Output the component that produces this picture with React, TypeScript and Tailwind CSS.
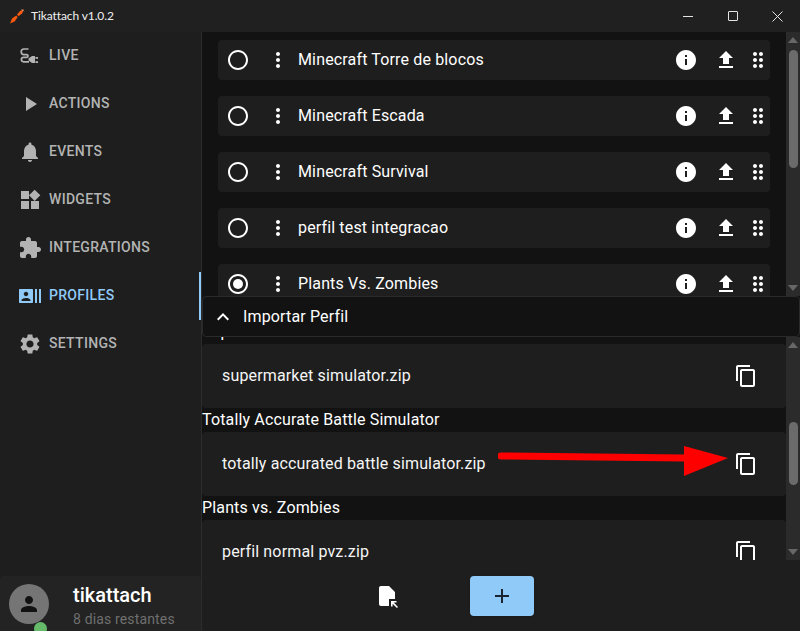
import type { ReactNode } from "react";

const icons = {
  radio: "M12 2C6.48 2 2 6.48 2 12s4.48 10 10 10 10-4.48 10-10S17.52 2 12 2zm0 18c-4.42 0-8-3.58-8-8s3.58-8 8-8 8 3.58 8 8-3.58 8-8 8z",
  more: "M12 8c1.1 0 2-.9 2-2s-.9-2-2-2-2 .9-2 2 .9 2 2 2zm0 2c-1.1 0-2 .9-2 2s.9 2 2 2 2-.9 2-2-.9-2-2-2zm0 6c-1.1 0-2 .9-2 2s.9 2 2 2 2-.9 2-2-.9-2-2-2z",
  info: "M12 2C6.48 2 2 6.48 2 12s4.48 10 10 10 10-4.48 10-10S17.52 2 12 2zm1 15h-2v-6h2v6zm0-8h-2V7h2v2z",
  upload: "M9 16h6v-6h4l-7-7-7 7h4zm-4 2h14v2H5z",
  drag: "M11 18c0 1.1-.9 2-2 2s-2-.9-2-2 .9-2 2-2 2 .9 2 2zm-2-8c-1.1 0-2 .9-2 2s.9 2 2 2 2-.9 2-2-.9-2-2-2zm0-6c-1.1 0-2 .9-2 2s.9 2 2 2 2-.9 2-2-.9-2-2-2zm6 4c1.1 0 2-.9 2-2s-.9-2-2-2-2 .9-2 2 .9 2 2 2zm0 2c-1.1 0-2 .9-2 2s.9 2 2 2 2-.9 2-2-.9-2-2-2zm0 6c-1.1 0-2 .9-2 2s.9 2 2 2 2-.9 2-2-.9-2-2-2z",
  copy: "M16 1H4c-1.1 0-2 .9-2 2v14h2V3h12V1zm3 4H8c-1.1 0-2 .9-2 2v14c0 1.1.9 2 2 2h11c1.1 0 2-.9 2-2V7c0-1.1-.9-2-2-2zm0 16H8V7h11v14z",
  expand: "M12 8l-6 6 1.41 1.41L12 10.83l4.59 4.58L18 14z",
  add: "M19 13h-6v6h-2v-6H5v-2h6V5h2v6h6v2z",
  play: "M8 5v14l11-7z",
  bell: "M12 22c1.1 0 2-.9 2-2h-4c0 1.1.89 2 2 2zm6-6v-5c0-3.07-1.64-5.64-4.5-6.32V4c0-.83-.67-1.5-1.5-1.5s-1.5.67-1.5 1.5v.68C7.63 5.36 6 7.92 6 11v5l-2 2v1h16v-1l-2-2z",
  widgets: "M13 13v8h8v-8h-8zM3 21h8v-8H3v8zM3 3v8h8V3H3zm13.66-1.31L11 7.34 16.66 13l5.66-5.66-5.66-5.65z",
  extension: "M20.5 11H19V7c0-1.1-.9-2-2-2h-4V3.5C13 2.12 11.88 1 10.5 1S8 2.12 8 3.5V5H4c-1.1 0-1.99.9-1.99 2v3.8H3.5c1.49 0 2.7 1.21 2.7 2.7s-1.21 2.7-2.7 2.7H2V20c0 1.1.9 2 2 2h3.8v-1.5c0-1.49 1.21-2.7 2.7-2.7 1.49 0 2.7 1.21 2.7 2.7V22H17c1.1 0 2-.9 2-2v-4h1.5c1.38 0 2.5-1.12 2.5-2.5S21.88 11 20.5 11z",
  actors: "M21 5v14h2V5h-2zm-4 14h2V5h-2v14zM14 5H2c-.55 0-1 .45-1 1v12c0 .55.45 1 1 1h12c.55 0 1-.45 1-1V6c0-.55-.45-1-1-1zM8 7.75c1.24 0 2.25 1.01 2.25 2.25S9.24 12.25 8 12.25 5.75 11.24 5.75 10 6.76 7.75 8 7.75zM12.5 17h-9v-.75c0-1.5 3-2.25 4.5-2.25s4.5.75 4.5 2.25V17z",
  settings: "M19.14 12.94c.04-.3.06-.61.06-.94 0-.32-.02-.64-.07-.94l2.03-1.58c.18-.14.23-.41.12-.61l-1.92-3.32c-.12-.22-.37-.29-.59-.22l-2.39.96c-.5-.38-1.03-.7-1.62-.94l-.36-2.54c-.04-.24-.24-.41-.48-.41h-3.84c-.24 0-.43.17-.47.41l-.36 2.54c-.59.24-1.13.57-1.62.94l-2.39-.96c-.22-.08-.47 0-.59.22L2.74 8.87c-.12.21-.08.47.12.61l2.03 1.58c-.05.3-.09.63-.09.94s.02.64.07.94l-2.03 1.58c-.18.14-.23.41-.12.61l1.92 3.32c.12.22.37.29.59.22l2.39-.96c.5.38 1.03.7 1.62.94l.36 2.54c.05.24.24.41.48.41h3.84c.24 0 .44-.17.47-.41l.36-2.54c.59-.24 1.13-.56 1.62-.94l2.39.96c.22.08.47 0 .59-.22l1.92-3.32c.12-.22.07-.47-.12-.61l-2.01-1.58zM12 15.6c-1.98 0-3.6-1.62-3.6-3.6s1.62-3.6 3.6-3.6 3.6 1.62 3.6 3.6-1.62 3.6-3.6 3.6z",
  person: "M12 12c2.21 0 4-1.79 4-4s-1.79-4-4-4-4 1.79-4 4 1.79 4 4 4zm0 2c-2.67 0-8 1.34-8 4v2h16v-2c0-2.66-5.33-4-8-4z",
  file: "M6 2h8l6 6v7h-6v7H6c-1.1 0-2-.9-2-2V4c0-1.1.9-2 2-2z",
  fileArrow: "M16 17h5.5v1.6h-2.8l4.3 4.3-1.1 1.1-4.3-4.3v2.8H16z",
};

function Icon({ d, className, children }: { d?: string; className: string; children?: ReactNode }) {
  return (
    <svg viewBox="0 0 24 24" fill="currentColor" className={className}>
      {d && <path d={d} />}
      {children}
    </svg>
  );
}

const navItems = [
  { label: "LIVE", icon: "live" },
  { label: "ACTIONS", icon: icons.play },
  { label: "EVENTS", icon: icons.bell },
  { label: "WIDGETS", icon: icons.widgets },
  { label: "INTEGRATIONS", icon: icons.extension },
  { label: "PROFILES", icon: icons.actors, active: true },
  { label: "SETTINGS", icon: icons.settings },
];

const profiles = [
  { name: "Minecraft Torre de blocos" },
  { name: "Minecraft Escada" },
  { name: "Minecraft Survival" },
  { name: "perfil test integracao" },
  { name: "Plants Vs. Zombies", selected: true },
];

function LiveIcon() {
  return (
    <Icon className="w-6 h-6 -mt-[2px]">
      <path
        d="M10.5 6H6a2.8 2.8 0 0 0 0 5.6h2.6a1.4 1.4 0 0 1 0 2.8H5.6a2.2 2.2 0 0 0 0 4.4H11"
        fill="none"
        stroke="currentColor"
        strokeWidth="1.7"
      />
      <path d="M10.5 15.5l3.5-2.5h3v7h-3l-3.5-2.5z" />
      <rect x="17.5" y="14" width="2.5" height="1.8" />
      <rect x="17.5" y="18.2" width="2.5" height="1.8" />
    </Icon>
  );
}

function TitleBar() {
  return (
    <div className="h-8 shrink-0 bg-[#202020] flex items-center justify-between">
      <div className="flex items-center pl-[9px]">
        <svg viewBox="0 0 16 16" className="w-4 h-4">
          <path d="M1 15.5l2-5 4.2-3 1.5 1.5-3 4.4z" fill="#f4590f" />
          <path d="M8 6.6l3-3.6 4-2-1.8 4.2-3.6 3z" fill="#f4590f" />
          <path d="M12.8 1.4l1.8 1.8" stroke="#d8d8d8" strokeWidth="0.8" />
        </svg>
        <span className="ml-[6px] text-[12px] tracking-[-0.1px] text-[#f0f0f0] font-['Lato','Open_Sans',sans-serif]">
          Tikattach v1.0.2
        </span>
      </div>
      <div className="flex items-center text-[#e4e4e4]">
        <div className="w-[45px] flex justify-center">
          <div className="w-[10px] h-px bg-current" />
        </div>
        <div className="w-[45px] flex justify-center">
          <div className="w-[10px] h-[10px] border border-current rounded-[1px]" />
        </div>
        <div className="w-[45px] flex justify-center">
          <svg viewBox="0 0 11 11" className="w-[11px] h-[11px]" stroke="currentColor" strokeWidth="1">
            <path d="M0.5 0.5l10 10M10.5 0.5l-10 10" />
          </svg>
        </div>
      </div>
    </div>
  );
}

function Sidebar() {
  return (
    <aside className="w-[202px] shrink-0 bg-[#1e1e1e] border-r border-[#2c2c2c] flex flex-col justify-between">
      <nav className="flex flex-col">
        {navItems.map((item) => (
          <div
            key={item.label}
            className={`relative h-12 flex items-center pl-[18px] ${item.active ? "text-[#90caf9]" : "text-[#b3b3b3]"}`}
          >
            {item.icon === "live" ? <LiveIcon /> : <Icon d={item.icon} className="w-6 h-6" />}
            <span className="ml-[7px] -mt-px text-[14px] font-medium tracking-[0.3px]">{item.label}</span>
            {item.active && <div className="absolute right-0 top-0 bottom-0 w-[2px] bg-[#90caf9]" />}
          </div>
        ))}
      </nav>
      <div className="h-[55px] bg-[#232323] rounded-t flex items-start pl-[9px] pt-2">
        <div className="relative w-10 h-10 rounded-full bg-[#757575] flex items-center justify-center text-[#121212]">
          <Icon d={icons.person} className="w-6 h-6" />
          <div className="absolute left-[25px] top-[38px] w-[13px] h-[13px] rounded-full bg-[#66bb6a]" />
        </div>
        <div className="ml-6 -mt-[1px]">
          <div className="text-[20px] leading-[24px] text-white font-medium">tikattach</div>
          <div className="mt-[2px] text-[14px] leading-[20px] text-[#6f6f6f] tracking-[0.15px]">8 dias restantes</div>
        </div>
      </div>
    </aside>
  );
}

function Scrollbar({ thumb }: { thumb: string }) {
  return (
    <div className="w-[14px] shrink-0 flex flex-col items-center bg-[#2b2b2b]">
      <div className="mt-[5px] w-0 h-0 border-x-[5px] border-x-transparent border-b-[6px] border-b-[#676767]" />
      <div className={`w-[9px] rounded-full bg-[#6b6b6b] ${thumb}`} />
      <div className="mt-auto mb-[5px] w-0 h-0 border-x-[5px] border-x-transparent border-t-[6px] border-t-[#676767]" />
    </div>
  );
}

function ProfileRow({ name, selected }: { name: string; selected?: boolean }) {
  return (
    <div className="h-10 shrink-0 rounded bg-[#1e1e1e] flex items-center text-white pl-2">
      <Icon className="w-6 h-6">
        <path d={icons.radio} />
        {selected && <circle cx="12" cy="12" r="5" />}
      </Icon>
      <Icon d={icons.more} className="ml-4 w-6 h-6" />
      <span className="ml-2 text-[16px] tracking-[0.15px]">{name}</span>
      <Icon d={icons.info} className="ml-auto w-6 h-6" />
      <Icon d={icons.upload} className="ml-4 w-6 h-6" />
      <Icon d={icons.drag} className="ml-2 w-6 h-6" />
    </div>
  );
}

function ZipRow({ name }: { name: string }) {
  return (
    <div className="h-16 shrink-0 rounded bg-[#1e1e1e] flex items-center text-white pl-5 pr-7">
      <span className="text-[16px] tracking-[0.15px] text-[#f5f5f5]">{name}</span>
      <Icon d={icons.copy} className="ml-auto w-6 h-6" />
    </div>
  );
}

function SectionTitle({ children }: { children: ReactNode }) {
  return <div className="h-6 shrink-0 text-[16px] leading-6 tracking-[0.15px] text-white">{children}</div>;
}

export default function App() {
  return (
    <div className="w-[800px] h-[631px] overflow-hidden flex flex-col bg-[#121212] font-['Roboto',sans-serif]">
      <TitleBar />
      <div className="flex-1 flex min-h-0">
        <Sidebar />
        <main className="flex-1 min-w-0 flex flex-col">
          <div className="h-[264px] shrink-0 flex overflow-hidden">
            <div className="flex-1 min-w-0 flex flex-col gap-4 pt-2 pl-4 pr-4">
              {profiles.map((p) => (
                <ProfileRow key={p.name} name={p.name} selected={p.selected} />
              ))}
            </div>
            <Scrollbar thumb="mt-[7px] h-[118px]" />
          </div>
          <div className="h-[41px] shrink-0 bg-[#121212] border border-[#2a2a2a] rounded flex items-center text-white">
            <Icon d={icons.expand} className="ml-2 w-6 h-6" />
            <span className="ml-2 text-[16px] tracking-[0.15px]">Importar Perfil</span>
          </div>
          <div className="h-[223px] shrink-0 flex overflow-hidden">
            <div className="flex-1 min-w-0 flex flex-col -mt-[17px]">
              <SectionTitle>Supermarket Simulator</SectionTitle>
              <ZipRow name="supermarket simulator.zip" />
              <SectionTitle>Totally Accurate Battle Simulator</SectionTitle>
              <div className="relative shrink-0">
                <ZipRow name="totally accurated battle simulator.zip" />
                <svg viewBox="0 0 232 32" className="absolute left-[296px] top-[14px] w-[232px] h-8">
                  <path d="M3 10L186 12" stroke="#ff0000" strokeWidth="7" strokeLinecap="round" />
                  <path d="M186 0L230 12L186 30z" fill="#ff0000" />
                </svg>
              </div>
              <SectionTitle>Plants vs. Zombies</SectionTitle>
              <ZipRow name="perfil normal pvz.zip" />
            </div>
            <Scrollbar thumb="mt-[74px] h-[63px]" />
          </div>
          <div className="flex-1 bg-[#1e1e1e] flex items-center pl-[173px]">
            <Icon className="w-6 h-6 text-white">
              <path d={icons.file} />
              <path d={icons.fileArrow} />
            </Icon>
            <button className="ml-[71px] w-16 h-10 rounded bg-[#90caf9] text-[#1a2430] flex items-center justify-center shadow">
              <Icon d={icons.add} className="w-6 h-6" />
            </button>
          </div>
        </main>
      </div>
    </div>
  );
}
